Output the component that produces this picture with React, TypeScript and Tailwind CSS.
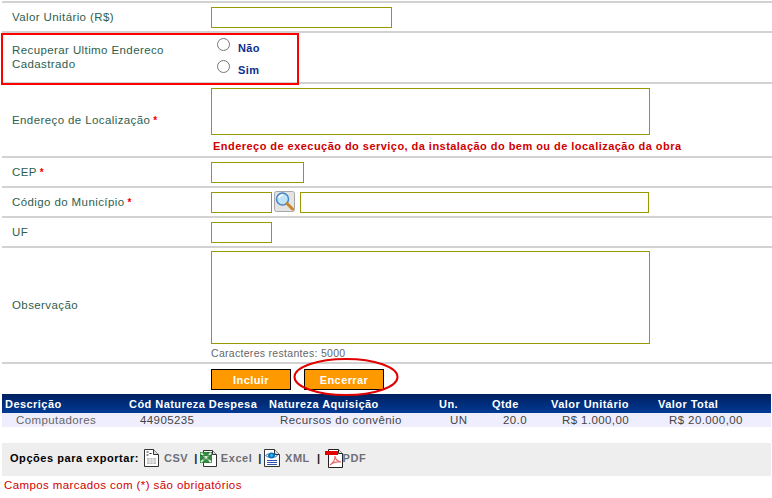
import type { ReactNode } from "react";

const inputCls = "block border border-[#999900] bg-white box-border";

function Star() {
  return <span className="text-[#f00000] font-bold text-[10px] ml-[3px]">*</span>;
}

function Row({ h, label, children }: { h: string; label: ReactNode; children: ReactNode }) {
  return (
    <div className={`flex items-center border-b-2 border-[#d2d2d2] box-border ${h}`}>
      <div className="w-[209px] pl-[10px] text-[#2e5e4e] shrink-0">{label}</div>
      <div>{children}</div>
    </div>
  );
}

function Radio({ label }: { label: string }) {
  return (
    <div className="flex items-center h-[22px]">
      <span className="w-[13px] h-[13px] rounded-full border border-[#767676] bg-white ml-[6px] mr-[8px] -mt-[5px]" />
      <span className="text-[#0b2f8f] font-bold mt-[2px] text-[11px]">{label}</span>
    </div>
  );
}

function CsvIcon() {
  return (
    <svg width="15" height="18" viewBox="0 0 15 18">
      <path d="M.5.5h9l5 5v12H.5z" fill="#fff" stroke="#333" />
      <path d="M9.5.5v5h5" fill="#ddd" stroke="#333" />
      <path d="M3 9h9v6H3z" fill="#bbb" />
      <path d="M3 11h9M3 13h9M6 9v6M9 9v6" stroke="#fff" strokeWidth=".7" />
      <path d="M2.5 3h2M2.5 6h2M5.5 4.5h2" stroke="#222" />
    </svg>
  );
}

function ExcelIcon() {
  return (
    <svg width="17" height="18" viewBox="0 0 17 18">
      <path d="M3.5 1.5h9l4 4v12h-13z" fill="#fff" stroke="#333" />
      <path d="M12.5 1.5v4h4" fill="#ddd" stroke="#333" />
      <path d="M0 3h12v11H0z" fill="#2f8f3e" />
      <path d="M1 4l10 9M11 4L1 13" stroke="#d5ecd5" strokeWidth="2" />
      <path d="M0 6.5h12M0 10h12M4 3v11M8 3v11" stroke="#1c5f28" strokeWidth=".6" />
    </svg>
  );
}

function XmlIcon() {
  return (
    <svg width="16" height="18" viewBox="0 0 16 18">
      <path d="M.5.5h10l5 5v12H.5z" fill="#fff" stroke="#333" />
      <path d="M10.5.5v5h5" fill="#ddd" stroke="#333" />
      <ellipse cx="7.5" cy="6.5" rx="3.5" ry="3" fill="#0a6fc0" />
      <circle cx="7.5" cy="6.5" r="1.4" fill="#27c0e0" />
      <path d="M2 6.5l2-2M2 6.5l2 2M13 6.5l-2-2M13 6.5l-2 2" stroke="#123a9a" />
      <path d="M3 11.5h10M3 13.5h10M3 15.5h10" stroke="#2a55b0" />
    </svg>
  );
}

function PdfIcon() {
  return (
    <svg width="18" height="20" viewBox="0 0 18 20">
      <path d="M3.5 1.5h10l4 4v14h-14z" fill="#fff" stroke="#222" />
      <path d="M13.5 1.5v4h4" fill="#eee" stroke="#222" />
      <path d="M0 3h13v4H0z" fill="#e30000" />
      <path d="M5 17c3-2 5-6 5-9 0 3 2 5 6 6-4-.5-8 0-11 3z" fill="none" stroke="#e86a6a" strokeWidth="1.2" />
    </svg>
  );
}

function LupaIcon() {
  return (
    <svg width="22" height="22" viewBox="0 0 22 22">
      <rect x=".5" y=".5" width="20" height="20" rx="2" fill="#e4e4e4" stroke="#a8a8a8" />
      <circle cx="8.5" cy="8" r="6" fill="#bfe3fb" stroke="#4a86c0" strokeWidth="1.5" />
      <path d="M5 7c.5-2 2-3 4-3" stroke="#fff" strokeWidth="1.5" fill="none" />
      <path d="M13 12.5l5.5 5.5" stroke="#c8862a" strokeWidth="3" strokeLinecap="round" />
    </svg>
  );
}

function ExportLink({ icon, label, cls }: { icon: ReactNode; label: string; cls: string }) {
  return (
    <span className={`flex items-center ${cls}`}>
      {icon}
      <span className="text-[#6e6e78] font-bold">{label}</span>
    </span>
  );
}

const headers = ["Descrição", "Cód Natureza Despesa", "Natureza Aquisição", "Un.", "Qtde", "Valor Unitário", "Valor Total"];
const cells = ["Computadores", "44905235", "Recursos do convênio", "UN", "20.0", "R$ 1.000,00", "R$ 20.000,00"];
const colWidths = ["w-[124px]", "w-[140px]", "w-[170px]", "w-[53px]", "w-[59px]", "w-[107px]", "w-[116px]"];

export default function App() {
  return (
    <div
      className="relative w-[772px] h-[498px] bg-white overflow-hidden text-[11.5px] leading-[14px] tracking-[0.4px] pl-[2px] pt-[1px]"
      style={{ fontFamily: '"Liberation Sans", Arial, sans-serif' }}
    >
      <div className="border-t-2 border-[#d2d2d2]" />
      <Row h="h-[30px]" label="Valor Unitário (R$)">
        <input className={`${inputCls} w-[181px] h-[21px]`} />
      </Row>
      <Row
        h="h-[51px]"
        label={
          <span className="block -mt-[2px]">
            Recuperar Ultimo Endereco
            <br />
            Cadastrado
          </span>
        }
      >
        <Radio label="Não" />
        <Radio label="Sim" />
      </Row>
      <Row h="h-[74px]" label={<>Endereço de Localização<Star /></>}>
        <textarea className={`${inputCls} w-[439px] h-[47px] resize-none`} />
        <div className="text-[#d00000] font-bold mt-[4px] ml-[2px] text-[11px] tracking-[0.46px]">
          Endereço de execução do serviço, da instalação do bem ou de localização da obra
        </div>
      </Row>
      <Row h="h-[30px]" label={<>CEP<Star /></>}>
        <input className={`${inputCls} w-[93px] h-[21px]`} />
      </Row>
      <Row h="h-[30px]" label={<>Código do Município<Star /></>}>
        <div className="flex items-center">
          <input className={`${inputCls} w-[61px] h-[21px]`} />
          <span className="mx-[2px] block h-[22px]">
            <LupaIcon />
          </span>
          <input className={`${inputCls} w-[349px] h-[21px] ml-[2px]`} />
        </div>
      </Row>
      <Row h="h-[30px]" label="UF">
        <input className={`${inputCls} w-[61px] h-[21px]`} />
      </Row>
      <Row h="h-[116px]" label="Observação">
        <textarea className={`${inputCls} w-[439px] h-[93px] resize-none`} />
        <div className="text-[#666666] text-[10.5px] tracking-[0.3px] mt-[2px]">Caracteres restantes: 5000</div>
      </Row>

      <div className="flex pl-[209px] pt-[5px] gap-[13px] h-[30px]">
        <button className="w-[80px] h-[21px] bg-[#ff9900] border border-black text-white font-bold text-[11px]">Incluir</button>
        <button className="w-[80px] h-[21px] bg-[#ff9900] border border-black text-white font-bold text-[11px]">Encerrar</button>
      </div>

      <table className="table-fixed border-collapse w-[769px]">
        <thead>
          <tr className="h-[19px] bg-gradient-to-b from-[#00205f] to-[#003a96] text-white font-bold text-[11px] tracking-[0.45px]">
            {headers.map((h, i) => (
              <th key={h} className={`${colWidths[i]} pl-[3px] text-left font-bold p-0`}>
                {h}
              </th>
            ))}
          </tr>
        </thead>
        <tbody>
          <tr className="h-[14px] bg-[#eeeeff] text-[#444444]">
            {cells.map((c, i) => (
              <td key={c} className={`pl-[14px] p-0 ${i === 0 ? "text-[#666666]" : ""}`}>
                {c}
              </td>
            ))}
          </tr>
        </tbody>
      </table>

      <div className="flex items-center w-[769px] h-[33px] bg-[#eeeeee] mt-[16px] pl-[8px] pb-[3px] font-bold text-black text-[11px] tracking-[0.55px]">
        <span className="mr-[5px]">Opções para exportar:</span>
        <ExportLink icon={<CsvIcon />} label="CSV" cls="gap-[5px] mr-[6px]" />
        <span className="text-[#222222] mr-[2px]">|</span>
        <ExportLink icon={<ExcelIcon />} label="Excel" cls="gap-[4px] mr-[6px]" />
        <span className="text-[#222222] mr-[2px]">|</span>
        <ExportLink icon={<XmlIcon />} label="XML" cls="gap-[5px] mr-[7px]" />
        <span className="text-[#222222] mr-[4px]">|</span>
        <ExportLink icon={<PdfIcon />} label="PDF" cls="gap-0" />
      </div>
      <div className="text-[#d00000] mt-[2px] pl-[2px] leading-[14px]">Campos marcados com (*) são obrigatórios</div>

      {/* anotações vermelhas por cima do formulário */}
      <div className="absolute left-[1px] top-[33px] w-[298px] h-[52px] border-2 border-[#ff0000]" />
      <svg className="absolute left-[293px] top-[357px]" width="106" height="40" viewBox="0 0 106 40">
        <ellipse cx="53" cy="20" rx="51.5" ry="18" fill="none" stroke="#e00000" strokeWidth="2" />
      </svg>
    </div>
  );
}
